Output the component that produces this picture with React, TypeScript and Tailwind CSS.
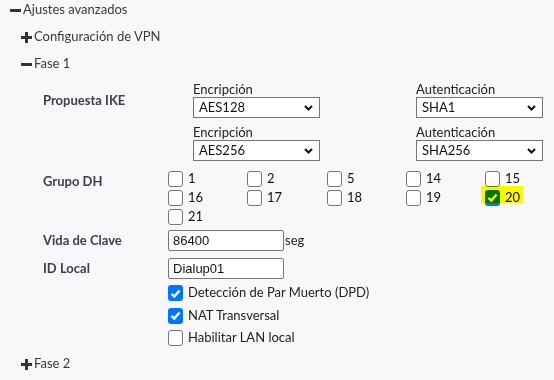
import React from "react";

const font = { fontFamily: "Lato, 'Noto Sans', sans-serif" };

function Minus() {
  return (
    <svg width="11" height="11" viewBox="0 0 11 11" className="shrink-0">
      <rect x="0" y="4" width="11" height="3" fill="#333" />
    </svg>
  );
}
function Plus() {
  return (
    <svg width="11" height="11" viewBox="0 0 11 11" className="shrink-0">
      <rect x="0" y="4" width="11" height="3" fill="#333" />
      <rect x="4" y="0" width="3" height="11" fill="#333" />
    </svg>
  );
}

function Header({ open, children }: { open: boolean; children: React.ReactNode }) {
  return (
    <div className="flex items-center h-[18px] gap-[2px] text-[13px] text-[#3a3a3a]">
      {open ? <Minus /> : <Plus />}
      <span>{children}</span>
    </div>
  );
}

function Box({ checked }: { checked?: boolean }) {
  return checked ? (
    <div className="w-[15px] h-[16px] rounded-[3px] bg-[#0075ff] flex items-center justify-center shrink-0">
      <svg width="11" height="11" viewBox="0 0 11 11">
        <path d="M1.5 5.8 L4.3 8.5 L9.5 2.5" fill="none" stroke="#fff" strokeWidth="2.3" />
      </svg>
    </div>
  ) : (
    <div className="w-[15px] h-[16px] rounded-[3px] border border-[#767676] bg-white shrink-0" />
  );
}

function Chevron() {
  return (
    <svg width="9" height="6" viewBox="0 0 9 6">
      <path d="M1 1 L4.5 4.5 L8 1" fill="none" stroke="#111" strokeWidth="2" />
    </svg>
  );
}

function Select({ value }: { value: string }) {
  return (
    <div className="w-[127px] h-[21px] border border-[#767676] bg-white flex items-center justify-between pl-[5px] pr-[6px] text-[13px] text-[#111]">
      <span>{value}</span>
      <Chevron />
    </div>
  );
}

function Field({ label, value }: { label: string; value: string }) {
  return (
    <div className="flex flex-col">
      <div className="h-[16px] leading-[16px] text-[13px] text-[#222]">{label}</div>
      <Select value={value} />
    </div>
  );
}

function DH({ n, checked, hl }: { n: string; checked?: boolean; hl?: boolean }) {
  return (
    <div className="relative flex items-center gap-[5px] h-[15px] text-[13px] text-[#111]">
      <Box checked={checked} />
      <span className="leading-[15px]">{n}</span>
      {hl && (
        <div className="absolute left-[-4px] top-[-4px] w-[42px] h-[17px] bg-[#ffff00] mix-blend-multiply" />
      )}
    </div>
  );
}

function Input({ value }: { value: string }) {
  return (
    <div
      className="w-[116px] h-[21px] border border-[#767676] rounded-[2px] bg-white flex items-center pl-[4px] text-[13px] text-[#111]"
      style={{ fontFamily: "'Liberation Sans', Arial, sans-serif" }}
    >
      {value}
    </div>
  );
}

function Check({ checked, label }: { checked?: boolean; label: string }) {
  return (
    <div className="flex items-center gap-[5px] h-[16px] text-[13px] text-[#222]">
      <Box checked={checked} />
      <span>{label}</span>
    </div>
  );
}

export default function App() {
  return (
    <div className="w-[554px] h-[380px] bg-[#f8f8fa] overflow-hidden pl-[10px] pt-[1px]" style={font}>
      <Header open>Ajustes avanzados</Header>
      <div className="pl-[11px]">
        <div className="mt-[9px]">
          <Header open={false}>Configuración de VPN</Header>
        </div>
        <div className="mt-[9px]">
          <Header open>Fase 1</Header>
        </div>
        <div className="pl-[22px]">
          {/* Propuesta IKE */}
          <div className="flex mt-[8px]">
            <div className="w-[125px] pt-[11px] text-[13px] font-bold text-[#3a3f4a] leading-[16px]">Propuesta IKE</div>
            <div className="pl-[25px] flex flex-col gap-[6px]">
              <div className="flex gap-[96px]">
                <Field label="Encripción" value="AES128" />
                <Field label="Autenticación" value="SHA1" />
              </div>
              <div className="flex gap-[96px]">
                <Field label="Encripción" value="AES256" />
                <Field label="Autenticación" value="SHA256" />
              </div>
            </div>
          </div>
          {/* Grupo DH */}
          <div className="flex mt-[10px]">
            <div className="w-[125px] pt-[2px] text-[13px] font-bold text-[#3a3f4a] leading-[16px]">Grupo DH</div>
            <div className="grid grid-cols-[79px_80px_79px_79px_60px] gap-y-[4px]">
              <DH n="1" />
              <DH n="2" />
              <DH n="5" />
              <DH n="14" />
              <DH n="15" />
              <DH n="16" />
              <DH n="17" />
              <DH n="18" />
              <DH n="19" />
              <DH n="20" checked hl />
              <DH n="21" />
            </div>
          </div>
          {/* Vida de Clave */}
          <div className="flex items-center mt-[6px]">
            <div className="w-[125px] text-[13px] font-bold text-[#3a3f4a]">Vida de Clave</div>
            <Input value="86400" />
            <span className="text-[13px] text-[#222] ml-[1px]">seg</span>
          </div>
          <div className="flex items-center mt-[7px]">
            <div className="w-[125px] text-[13px] font-bold text-[#3a3f4a]">ID Local</div>
            <Input value="Dialup01" />
          </div>
          <div className="pl-[125px] flex flex-col mt-[6px] gap-[6.5px]">
            <Check checked label="Detección de Par Muerto (DPD)" />
            <Check checked label="NAT Transversal" />
            <Check label="Habilitar LAN local" />
          </div>
        </div>
        <div className="mt-[9px]">
          <Header open={false}>Fase 2</Header>
        </div>
      </div>
    </div>
  );
}
